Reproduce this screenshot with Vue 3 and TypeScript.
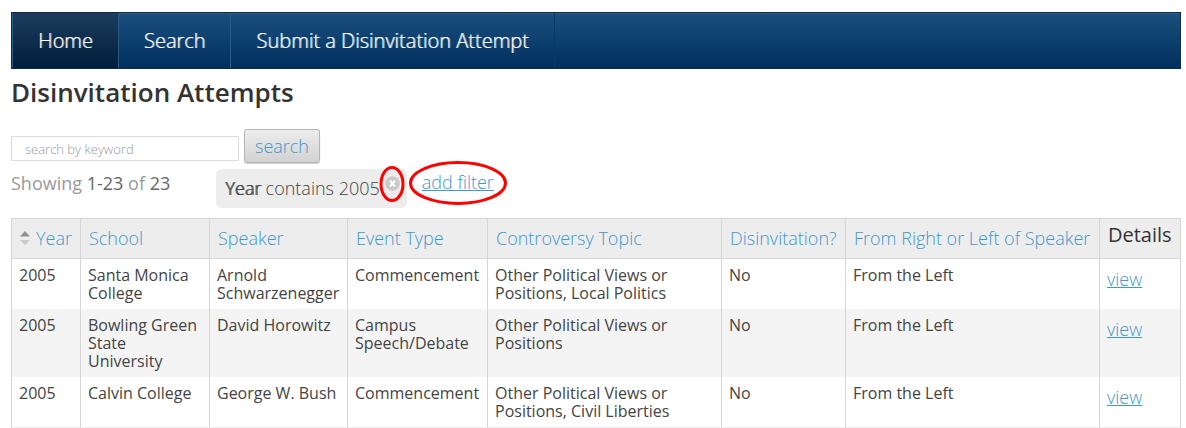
<script setup lang="ts">
import { ref } from 'vue'

interface Attempt {
  year: number
  school: string
  speaker: string
  event: string
  topic: string
  disinvited: string
  side: string
}

const keyword = ref('')
const navItems = ['Home', 'Search', 'Submit a Disinvitation Attempt']
const current = ref('Home')
const columns = [
  'School',
  'Speaker',
  'Event Type',
  'Controversy Topic',
  'Disinvitation?',
  'From Right or Left of Speaker',
]
const attempts: Attempt[] = [
  {
    year: 2005,
    school: 'Santa Monica College',
    speaker: 'Arnold Schwarzenegger',
    event: 'Commencement',
    topic: 'Other Political Views or Positions, Local Politics',
    disinvited: 'No',
    side: 'From the Left',
  },
  {
    year: 2005,
    school: 'Bowling Green State University',
    speaker: 'David Horowitz',
    event: 'Campus Speech/Debate',
    topic: 'Other Political Views or Positions',
    disinvited: 'No',
    side: 'From the Left',
  },
  {
    year: 2005,
    school: 'Calvin College',
    speaker: 'George W. Bush',
    event: 'Commencement',
    topic: 'Other Political Views or Positions, Civil Liberties',
    disinvited: 'No',
    side: 'From the Left',
  },
]
</script>

<template>
  <div class="page">
    <nav class="nav">
      <a
        v-for="item in navItems"
        :key="item"
        href="#"
        class="nav-item"
        :class="{ active: item === current }"
        @click.prevent="current = item"
        >{{ item }}</a
      >
    </nav>

    <h1 class="title">Disinvitation Attempts</h1>

    <form class="search" @submit.prevent>
      <input
        v-model="keyword"
        class="keyword"
        type="text"
        placeholder="search by keyword"
        aria-label="search by keyword"
      />
      <button class="search-button" type="submit">search</button>
    </form>

    <div class="filters">
      <p class="count">Showing <span>1-23</span> of <span>23</span></p>
      <div class="chip">
        <span><b>Year</b> contains 2005</span>
        <button class="remove" type="button" aria-label="Remove filter">
          <svg class="cross" viewBox="0 0 15 15" width="15" height="15">
            <circle cx="7.5" cy="7.5" r="7.3" fill="#c9c9c9" />
            <path d="M5 4.5l5 6M10 4.5l-5 6" stroke="#fff" stroke-width="2" />
          </svg>
          <svg class="ring" viewBox="0 0 26 38" width="26" height="38">
            <ellipse cx="13" cy="19" rx="11" ry="16.5" />
          </svg>
        </button>
      </div>
      <div class="add">
        <a href="#" @click.prevent>add filter</a>
        <svg class="ring" viewBox="0 0 100 46" width="100" height="46">
          <ellipse cx="50" cy="23" rx="47.5" ry="20.5" />
        </svg>
      </div>
    </div>

    <table class="grid">
      <colgroup>
        <col class="c-year" />
        <col class="c-school" />
        <col class="c-speaker" />
        <col class="c-event" />
        <col />
        <col class="c-dis" />
        <col class="c-side" />
        <col class="c-details" />
      </colgroup>
      <thead>
        <tr>
          <th class="year">
            <a href="#" @click.prevent>
              <svg viewBox="0 0 10 14" width="10" height="14">
                <path d="M0 5.5L5 0l5 5.5z" fill="#929292" />
                <path d="M0 9l5 5 5-5z" fill="#c8c8c8" />
              </svg>
              Year
            </a>
          </th>
          <th v-for="c in columns" :key="c">
            <a href="#" @click.prevent>{{ c }}</a>
          </th>
          <th class="details">Details</th>
        </tr>
      </thead>
      <tbody>
        <tr v-for="a in attempts" :key="a.speaker">
          <td>{{ a.year }}</td>
          <td>{{ a.school }}</td>
          <td>{{ a.speaker }}</td>
          <td>{{ a.event }}</td>
          <td>{{ a.topic }}</td>
          <td>{{ a.disinvited }}</td>
          <td>{{ a.side }}</td>
          <td class="view"><a href="#" @click.prevent>view</a></td>
        </tr>
      </tbody>
    </table>
  </div>
</template>

<style>
body {
  margin: 0;
  background: #fff;
}
</style>

<style scoped>
.page {
  padding: 12px 5px 0 11px;
  font-family: 'Open Sans', 'Noto Sans', sans-serif;
  font-size: 18px;
  font-weight: 300;
  color: #444;
}
.page * {
  box-sizing: border-box;
}
a {
  color: #3f98cd;
}
.nav {
  display: flex;
  height: 57px;
  border: 1px solid #0b2b47;
  background: linear-gradient(#1b4f7e, #003060);
  box-shadow: inset 0 1px #2c5c86;
}
.nav-item {
  padding: 0 25px;
  border-left: 1px solid #2a5b87;
  font-size: 20px;
  line-height: 56px;
  color: #fff;
  text-decoration: none;
  text-shadow: 1px 0 rgba(255, 255, 255, 0.6);
}
.nav-item:last-child {
  border-right: 1px solid #0c3964;
}
.nav-item.active {
  background: linear-gradient(#1c3d5e, #001e3d);
}
.title {
  margin: 6px 0 0;
  font-size: 26px;
  font-weight: 600;
  line-height: 34px;
  color: #333;
}
.search {
  display: flex;
  align-items: flex-end;
  gap: 5px;
  margin-top: 20px;
}
.keyword {
  width: 228px;
  height: 25px;
  margin: 0 0 2px;
  padding: 1px 13px 0;
  border: 1px solid #ddd;
  background: #fff;
  font: 300 13px 'Open Sans', sans-serif;
  color: #444;
}
.keyword::placeholder {
  color: #999;
  opacity: 1;
}
.search-button {
  height: 34px;
  padding: 0 10px;
  border: 1px solid #b5b5b5;
  border-radius: 3px;
  background: linear-gradient(#ededed, #d2d2d2);
  box-shadow: 0 1px 1px #ccc;
  font: 300 18px 'Open Sans', sans-serif;
  color: #3f98cd;
}
.filters {
  display: flex;
  align-items: flex-start;
  margin-top: 6px;
}
.count {
  width: 205px;
  margin: 0;
  font-weight: 400;
  line-height: 28px;
  color: #999;
}
.count span {
  color: #666;
}
.chip {
  display: flex;
  height: 39px;
  padding: 0 7px 0 9px;
  border-radius: 5px;
  background: #ededed;
  line-height: 39px;
}
.chip b {
  font-weight: 300;
  text-shadow: 1px 0 #444;
}
.remove {
  position: relative;
  width: 15px;
  height: 15px;
  margin: 7px 0 0 5px;
  padding: 0;
  border: 0;
  background: none;
}
.cross {
  display: block;
}
.add {
  position: relative;
  margin-left: 15px;
  line-height: 27px;
}
.ring {
  position: absolute;
  top: 50%;
  left: 50%;
  transform: translate(-50%, -50%);
  fill: none;
  stroke: #ff0000;
  stroke-width: 3;
  pointer-events: none;
}
.grid {
  width: 100%;
  margin-top: 10px;
  border-collapse: separate;
  border-spacing: 0;
  border-right: 1px solid #d6d6d6;
  table-layout: fixed;
}
.c-year { width: 69px; }
.c-school { width: 129px; }
.c-speaker { width: 138px; }
.c-event { width: 140px; }
.c-dis { width: 124px; }
.c-side { width: 254px; }
.c-details { width: 81px; }
th {
  height: 41px;
  padding: 0 0 2px 8px;
  border: solid #d6d6d6;
  border-width: 1px 0 1px 1px;
  background: #ededed;
  font-weight: 300;
  line-height: 30px;
  text-align: left;
  white-space: nowrap;
}
th a {
  text-decoration: none;
}
th.year a {
  display: flex;
  align-items: center;
  gap: 6px;
}
th.details {
  padding-bottom: 7px;
  font-size: 20px;
  font-weight: 400;
  color: #333;
}
td {
  padding: 7px;
  border-left: 1px solid #d6d6d6;
  font-size: 16px;
  font-weight: 400;
  line-height: 18px;
  vertical-align: top;
}
tbody tr:nth-child(even) {
  background: #f4f4f4;
}
tbody tr:last-child td {
  border-bottom: 1px solid #eee;
}
td.view {
  padding-top: 11px;
  font-size: 18px;
  font-weight: 300;
}
</style>
